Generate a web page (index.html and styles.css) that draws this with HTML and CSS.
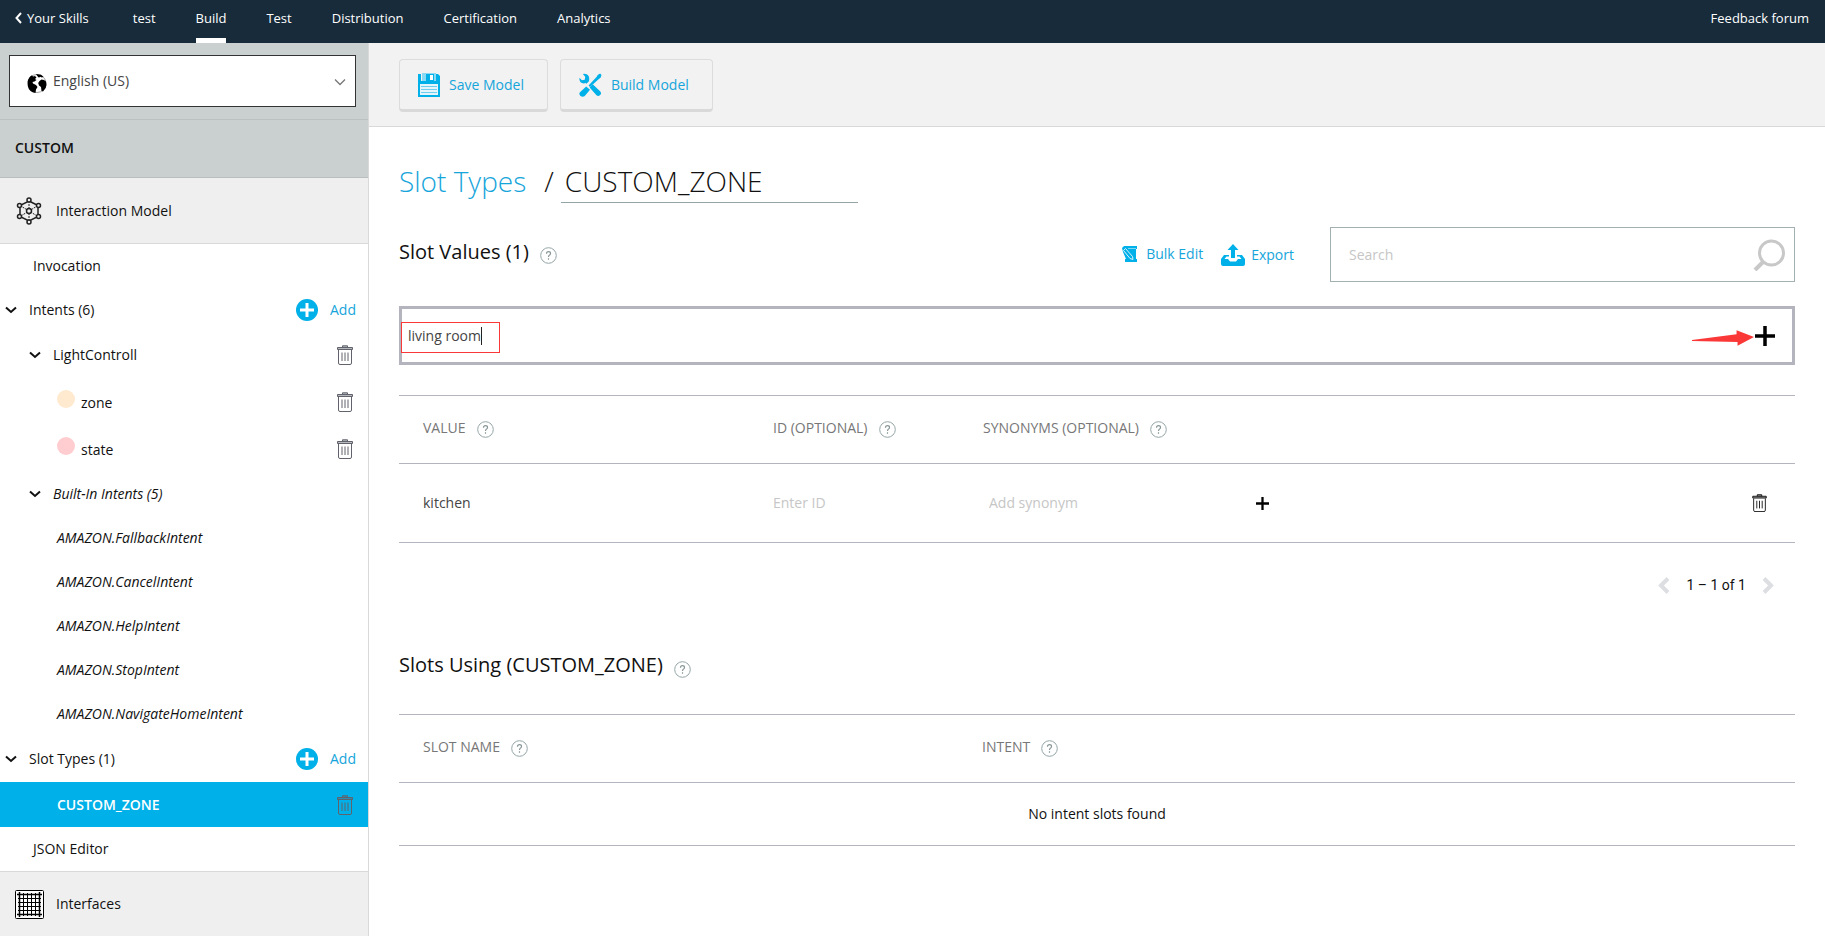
FILE: index.html
```html
<!DOCTYPE html>
<html lang="en">
<head>
<meta charset="utf-8">
<title>Slot Types / CUSTOM_ZONE</title>
<link rel="stylesheet" href="styles.css">
</head>
<body>
<svg class="sprite" aria-hidden="true">
  <symbol id="trash" viewBox="0 0 16 20">
    <path d="M5.5 2.5V.8h5v1.7M.5 2.5h15v2H.5z" fill="currentColor" fill-opacity=".45" stroke="currentColor"/>
    <path d="M1.500 5v13q0 1.500 1.500 1.500h10q1.500 0 1.500-1.500V5" fill="none" stroke="currentColor"/>
    <path d="M5 7.500v8.500M8 7.500v8.500M11 7.500v8.500" stroke="currentColor"/>
  </symbol>
  <symbol id="chevron" viewBox="0 0 12 8">
    <path d="M1 1.500l5 4.500 5-4.500" fill="none" stroke="currentColor" stroke-width="2"/>
  </symbol>
  <symbol id="help" viewBox="0 0 17 17">
    <circle cx="8.500" cy="8.500" r="7.800" fill="none" stroke="#95a5a6"/>
    <path d="M6.500 6.700q0-2 2-2t2 1.800q0 1.200-1.200 1.800-.8.500-.8 1.700M8.500 11.300v1.400" fill="none" stroke="#879596" stroke-width="1.200"/>
  </symbol>
  <symbol id="addcircle" viewBox="0 0 22 22">
    <circle cx="11" cy="11" r="11" fill="#00b0e8"/>
    <path d="M11 4v14M4 11h14" stroke="#fff" stroke-width="3"/>
  </symbol>
  <symbol id="plus" viewBox="0 0 20 20">
    <path d="M10 0v20M0 10h20" stroke="currentColor" stroke-width="3.500"/>
  </symbol>
</svg>

<header class="topbar">
  <a class="back" href="#"><svg width="7" height="12" viewBox="0 0 7 12"><path d="M6 1L1.500 6 6 11" fill="none" stroke="#fff" stroke-width="2"/></svg>Your Skills</a>
  <nav class="tabs">
    <a href="#">test</a>
    <a class="active" href="#">Build</a>
    <a href="#">Test</a>
    <a href="#">Distribution</a>
    <a href="#">Certification</a>
    <a href="#">Analytics</a>
  </nav>
  <a class="feedback" href="#">Feedback forum</a>
</header>

<div class="layout">
  <aside class="sidebar">
    <div class="locale">
      <div class="locale-box">
        <svg class="globe" width="20" height="21" viewBox="0 0 20 21"><circle cx="10" cy="10.500" r="9" fill="#fff" stroke="#888" stroke-width=".8"/><path d="M.6 8.500Q1.500 4 5 2.200l1 1.300 2-.5 1.500 1.500L8 6l1.500 1-2 1.500-2 .5.500 1.500 3 1.500 1.500 2L9 16.500 8.500 20Q2 19 .8 13zM12.500 8l2-1.500 2.500.5 2 1.500q1 3-.3 6.500L16 18.500l-1.500-.5-.5-4-2-1.500-.8-2.500zM9 1l5 .8 2.500 2-1.500.7-2-.8-1 1-1.500-1.500z"/></svg>
        <select class="locale-select" aria-label="Language"><option>English (US)</option></select>
        <svg class="locale-arrow" width="12" height="8"><path d="M1 1.500l5 5 5-5" fill="none" stroke="#777" stroke-width="1.300"/></svg>
      </div>
    </div>
    <h2 class="section-title">CUSTOM</h2>
    <a class="group" href="#">
      <svg width="26" height="28" viewBox="0 0 26 28" fill="none" stroke="#222"><path d="M13 4L22 8.500v11L13 24 4 19.500v-11z" stroke-width="1.500"/><path d="M13 4v20M4 8.500l18 11M22 8.500l-18 11" stroke-dasharray="2 1"/><g fill="#efefef" stroke-width="1.500"><circle cx="13" cy="3" r="2"/><circle cx="22.500" cy="8.500" r="2"/><circle cx="22.500" cy="19.500" r="2"/><circle cx="13" cy="25" r="2"/><circle cx="3.500" cy="19.500" r="2"/><circle cx="3.500" cy="8.500" r="2"/><circle cx="13" cy="14" r="2.500"/></g></svg>
      Interaction Model
    </a>
    <nav class="tree">
      <div class="row level0"><a href="#">Invocation</a></div>
      <div class="row branch0"><svg class="chev"><use href="#chevron"/></svg><a href="#">Intents (6)</a><button class="add"><svg><use href="#addcircle"/></svg>Add</button></div>
      <div class="row branch1 mid"><svg class="chev"><use href="#chevron"/></svg><a href="#">LightControll</a><button class="del" aria-label="Delete LightControll"><svg><use href="#trash"/></svg></button></div>
      <div class="row level2 tall slot"><span class="dot zone"></span><a href="#">zone</a><button class="del" aria-label="Delete zone"><svg><use href="#trash"/></svg></button></div>
      <div class="row level2 tall slot"><span class="dot state"></span><a href="#">state</a><button class="del" aria-label="Delete state"><svg><use href="#trash"/></svg></button></div>
      <div class="row branch1 italic"><svg class="chev"><use href="#chevron"/></svg><a href="#">Built-In Intents (5)</a></div>
      <div class="row level2 italic"><a href="#">AMAZON.FallbackIntent</a></div>
      <div class="row level2 italic"><a href="#">AMAZON.CancelIntent</a></div>
      <div class="row level2 italic"><a href="#">AMAZON.HelpIntent</a></div>
      <div class="row level2 italic"><a href="#">AMAZON.StopIntent</a></div>
      <div class="row level2 italic"><a href="#">AMAZON.NavigateHomeIntent</a></div>
      <div class="row branch0 mid"><svg class="chev"><use href="#chevron"/></svg><a href="#">Slot Types (1)</a><button class="add"><svg><use href="#addcircle"/></svg>Add</button></div>
      <div class="row level2 mid selected"><a href="#">CUSTOM_ZONE</a><button class="del" aria-label="Delete CUSTOM_ZONE"><svg><use href="#trash"/></svg></button></div>
      <div class="row level0"><a href="#">JSON Editor</a></div>
    </nav>
    <a class="group interfaces" href="#">
      <svg width="29" height="29" viewBox="0 0 29 29" fill="none" stroke="#000"><rect x=".5" y=".5" width="28" height="28" rx="1" fill="#fff"/><path d="M2 4.500h25M4.500 2v25M2 24.500h25M24.500 2v25" stroke-width="1.500"/><path d="M3 8.500h23M3 12.500h23M3 16.500h23M3 20.500h23M8.500 3v23M12.500 3v23M16.500 3v23M20.500 3v23"/></svg>
      Interfaces
    </a>
  </aside>

  <main class="main">
    <div class="toolbar">
      <button class="tool"><svg width="22" height="24" viewBox="0 0 22 24"><path d="M0 1h3v7h15V1h2l2 2v21H0z" fill="#00b0e8"/><path d="M4 0h14v8H4z" fill="#8bd9f3"/><path d="M8 1h8v7H8z" fill="#00b0e8"/><path d="M12 2h3v5h-3z" fill="#fff"/><path d="M2 11h18v11H2z" fill="#e4f6fc"/><path d="M3 13.500h16M3 16.500h16M3 19.500h16" stroke="#6ccff0"/></svg>Save Model</button>
      <button class="tool"><svg width="23" height="24" viewBox="0 0 24 25"><path d="M4 1l2.500 3-.5 3-3 .5L.5 5Q0 9 3 10.500q2 .8 4 0L18 23q2 2 4 0t0-4L10.500 8Q11.500 3 8 1.300 6 .3 4 1z" fill="#00b0e8"/><path d="M8.500 14L21 1.500" stroke="#f2f2f2" stroke-width="5"/><path d="M23.500 2L22 .5 19.500 2l-1 2L10 13l1.500 1.500L21 6l1.500-1zM7.500 14l4 3.500-5.500 6.500q-2 1.500-4.500 0-2-2-.5-4z" fill="#00b0e8"/></svg>Build Model</button>
    </div>

    <div class="content">
      <h1 class="title"><a href="#">Slot Types</a><span class="slash">/</span><input class="name" aria-label="Slot type name" value="CUSTOM_ZONE"></h1>

      <div class="values-head">
        <h2 class="subtitle">Slot Values (1)<svg class="help"><use href="#help"/></svg></h2>
        <button class="action bulk"><svg width="15" height="16" viewBox="0 0 15 16"><path d="M2 0h13v3h-1v10h1v3H3v-3h1L1 6 0 2z" fill="#00b0e8"/><path d="M1.500 4.500l2-2 7 8 .5 3-3-1z" fill="none" stroke="#d7f3fc"/><path d="M6 2.500h8" stroke="#7fd6f3"/></svg>Bulk Edit</button>
        <button class="action export"><svg width="24" height="22" viewBox="0 0 24 22"><path d="M12 0l5.500 6H14v8h-4V6H6.500z" fill="#00b0e8"/><path d="M0 15l3-4h5v1.500H5.500L3.500 15H7l2 2.500h6l2-2.500h3.500l-2-2.500H16V11h5l3 4v5q0 2-2 2H2q-2 0-2-2z" fill="#00b0e8"/></svg>Export</button>
        <div class="search"><input type="search" aria-label="Search" placeholder="Search"><svg width="32" height="32" viewBox="0 0 32 32" fill="none" stroke="#c8c8c8" stroke-width="3"><circle cx="18.500" cy="14" r="12"/><path d="M10 23l-8 8" stroke-width="4"/></svg></div>
      </div>

      <div class="new-value">
        <div class="typed"><input aria-label="New slot value" value="living room"><span class="mark"></span><span class="caret"></span></div>
        <svg class="arrow" width="62" height="16" viewBox="0 0 64 16"><path d="M0 10L46 4V0l18 7-17 9v-4L0 11z" fill="#fb3838"/></svg>
        <button class="plus big" aria-label="Add value"><svg><use href="#plus"/></svg></button>
      </div>

      <table class="grid values">
        <thead><tr><th class="c-value">VALUE<svg class="help"><use href="#help"/></svg></th><th class="c-id">ID (OPTIONAL)<svg class="help"><use href="#help"/></svg></th><th class="c-syn">SYNONYMS (OPTIONAL)<svg class="help"><use href="#help"/></svg></th><th></th></tr></thead>
        <tbody><tr>
          <td>kitchen</td>
          <td><input aria-label="ID" placeholder="Enter ID"></td>
          <td><div class="synonym"><input aria-label="Synonym" placeholder="Add synonym"><button class="plus" aria-label="Add synonym"><svg><use href="#plus"/></svg></button></div></td>
          <td class="end"><button class="del dark" aria-label="Delete kitchen"><svg><use href="#trash"/></svg></button></td>
        </tr></tbody>
      </table>

      <div class="pager">
        <button aria-label="Previous"><svg width="12" height="17" viewBox="0 0 12 17"><path d="M10 1.500L3 8.500l7 7" fill="none" stroke="#dcdee2" stroke-width="4"/></svg></button>
        <span>1 – 1 of 1</span>
        <button aria-label="Next"><svg width="12" height="17" viewBox="0 0 12 17"><path d="M2 1.500l7 7-7 7" fill="none" stroke="#dcdee2" stroke-width="4"/></svg></button>
      </div>

      <h2 class="subtitle using">Slots Using (CUSTOM_ZONE)<svg class="help"><use href="#help"/></svg></h2>
      <table class="grid usage">
        <thead><tr><th class="c-slot">SLOT NAME<svg class="help"><use href="#help"/></svg></th><th>INTENT<svg class="help"><use href="#help"/></svg></th></tr></thead>
        <tbody><tr><td colspan="2" class="empty">No intent slots found</td></tr></tbody>
      </table>
    </div>
  </main>
</div>
</body>
</html>
```

FILE: styles.css
```css
* { box-sizing: border-box; }
body {
  margin: 0;
  min-height: 100vh;
  display: flex;
  flex-direction: column;
  font: 14px/20px "Open Sans", "Noto Sans", sans-serif;
  color: #111;
  background: #fff;
}
a { color: inherit; text-decoration: none; }
button, input, select { font: inherit; color: inherit; background: none; border: 0; padding: 0; margin: 0; outline: 0; }
button { cursor: pointer; }
input { min-width: 0; }
input::placeholder { color: #c6c6c6; opacity: 1; }
h1, h2 { margin: 0; font-weight: 400; }
.sprite { display: none; }
svg { flex: none; }

.topbar { display: flex; height: 43px; padding: 0 16px 0 15px; font-size: 13px; background: #172b3a; color: #fff; }
.topbar a { display: flex; align-items: center; height: 43px; padding-bottom: 7px; }
.back { gap: 5px; }
.tabs { display: flex; gap: 40px; margin-left: 44px; }
.tabs .active { box-shadow: inset 0 -5px #fff; }
.feedback { margin-left: auto; }

.layout { display: flex; flex: 1; }
.sidebar { display: flex; flex-direction: column; width: 369px; flex: none; border-right: 1px solid #d9d9d9; }
.locale { height: 77px; padding: 12px 12px 0 9px; background: #cacfcf; border-bottom: 1px solid #bcc0c0; }
.locale-box { position: relative; height: 52px; background: #fff; border: 1px solid #333; }
.locale-select { width: 100%; height: 100%; padding-left: 43px; appearance: none; color: #444; }
.globe { position: absolute; left: 17px; top: 17px; pointer-events: none; }
.locale-arrow { position: absolute; right: 9px; top: 22px; pointer-events: none; }
.section-title { height: 58px; padding: 18px 15px; font-size: 14px; line-height: 20px; font-weight: 600; background: #cacfcf; border-bottom: 1px solid #b9bebe; }
.group { display: flex; align-items: center; gap: 14px; height: 66px; padding-left: 16px; background: #efefef; border-bottom: 1px solid #d9d9d9; }
.interfaces { flex: 1; min-height: 64px; gap: 12px; padding-left: 15px; border-top: 1px solid #d9d9d9; border-bottom: 0; }

.row { display: flex; align-items: center; height: 44px; padding-right: 12px; }
.tall { height: 47px; }
.mid { height: 46px; }
.level0 { padding-left: 33px; }
.branch0 { padding-left: 5px; }
.branch1 { padding-left: 29px; }
.level2 { padding-left: 57px; }
.italic { font-style: italic; }
.chev { width: 12px; height: 8px; margin-right: 12px; }
.add { display: flex; align-items: center; gap: 12px; margin-left: auto; color: #16a5db; }
.add svg { width: 22px; height: 22px; }
.del { display: flex; margin-left: auto; margin-right: 3px; color: #60636b; }
.del svg { width: 16px; height: 20px; }
.dot { width: 18px; height: 18px; margin-right: 6px; margin-bottom: 6px; border-radius: 50%; }
.slot a { padding-top: 2px; }
.zone { background: #ffe9cf; }
.state { background: #ffcdcf; }
.selected { height: 45px; background: #00b0e8; color: #fff; font-weight: 600; }

.main { flex: 1; min-width: 0; }
.toolbar { display: flex; gap: 12px; height: 84px; padding: 16px 30px 0; background: #f2f2f2; border-bottom: 1px solid #d9d9d9; }
.tool { display: flex; align-items: center; gap: 9px; height: 53px; padding: 0 23px 0 18px; color: #16a5db; border: 1px solid #dcdcdc; border-bottom: 3px solid #d9d9d9; border-radius: 4px; }

.content { padding: 36px 30px 30px; }
.title { display: flex; align-items: flex-end; font-size: 28px; line-height: 36px; font-weight: 300; }
.title a, .slash { padding-bottom: 4px; }
.title a { color: #16a5db; }
.slash { margin: 0 7px 0 18px; }
.name { width: 297px; height: 40px; padding: 0 4px 3px; border-bottom: 1px solid #95a5a6; font-weight: 300; }
.values-head { display: flex; align-items: center; height: 55px; margin-top: 24px; }
.subtitle { display: flex; align-items: center; gap: 11px; font-size: 20px; line-height: 26px; }
.help { width: 17px; height: 17px; }
.subtitle .help { margin-top: 8px; }
.values-head .subtitle { margin-bottom: 6px; margin-right: auto; }
.action { display: flex; align-items: center; color: #16a5db; }
.bulk { gap: 9px; margin-right: 18px; margin-bottom: 2px; }
.export { gap: 6px; margin-right: 36px; }
.search { display: flex; align-items: center; width: 465px; height: 55px; padding: 0 9px 0 18px; border: 1px solid #a2b0b1; }
.search input { flex: 1; }

.new-value { position: relative; display: flex; align-items: center; height: 59px; margin-top: 24px; padding-right: 17px; border: 3px solid #b4b4be; }
.typed { position: relative; flex: 1; }
.typed input { display: block; width: 100%; padding-left: 6px; color: #444; }
.mark { position: absolute; left: -1px; top: -4px; width: 99px; height: 31px; border: 1px solid #fb3838; }
.caret { position: absolute; left: 79px; top: 1px; width: 1px; height: 18px; background: #222; }
.arrow { margin-top: 4px; margin-right: 1px; }
.plus { display: flex; color: #000; }
.plus svg { width: 13px; height: 13px; }
.plus.big svg { width: 20px; height: 20px; }

.grid { width: 100%; border-collapse: collapse; table-layout: fixed; border-top: 1px solid #b4b4be; }
.grid tr { border-bottom: 1px solid #b4b4be; }
.grid th { height: 68px; padding: 0 0 4px 24px; text-align: left; font-weight: 400; color: #777; }
.grid td { height: 79px; padding: 0 0 0 24px; color: #444; }
.grid .help { margin-left: 11px; vertical-align: -5px; }
.values { margin-top: 30px; }
.c-value { width: 350px; }
.c-id { width: 210px; }
.c-syn { width: 310px; }
.synonym { display: flex; align-items: center; padding-left: 6px; }
.synonym input { width: 267px; }
.end .del { margin-right: 28px; color: #111; }
.end svg { width: 15px; height: 18px; }
.pager { display: flex; align-items: center; justify-content: flex-end; gap: 16px; margin-top: 32px; padding-right: 21px; font-family: Roboto, sans-serif; }
.pager button { display: flex; }
.using { margin-top: 57px; }
.grid.usage { margin-top: 36px; }
.usage td { height: 63px; }
.c-slot { width: 559px; }
.grid .empty { padding: 0; text-align: center; color: #111; }
```
